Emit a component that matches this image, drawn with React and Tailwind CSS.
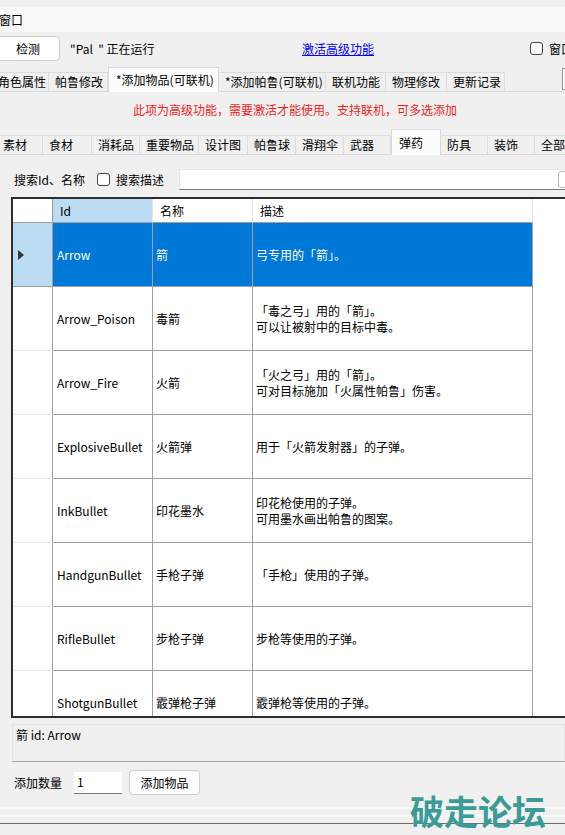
import React from 'react';

const mainTabs = [
  { label: '角色属性', cls: 'w-[57px] -ml-[8px]' },
  { label: '帕鲁修改', cls: 'w-[59px]' },
  { label: '*添加物品(可联机)', cls: 'w-[111px]', active: true },
  { label: '*添加帕鲁(可联机)', cls: 'w-[107px]' },
  { label: '联机功能', cls: 'w-[60px]' },
  { label: '物理修改', cls: 'w-[61px]' },
  { label: '更新记录', cls: 'w-[58px]' },
];

const itemTabs = [
  { label: '素材', cls: 'w-[46px] -ml-[3px]' },
  { label: '食材', cls: 'w-[49px]' },
  { label: '消耗品', cls: 'w-[48px]' },
  { label: '重要物品', cls: 'w-[59px]' },
  { label: '设计图', cls: 'w-[49px]' },
  { label: '帕鲁球', cls: 'w-[48px]' },
  { label: '滑翔伞', cls: 'w-[48px]' },
  { label: '武器', cls: 'w-[47px]' },
  { label: '弹药', cls: 'w-[50px]', active: true },
  { label: '防具', cls: 'w-[47px]' },
  { label: '装饰', cls: 'w-[47px]' },
  { label: '全部', cls: 'w-[48px]' },
];

const items = [
  { id: 'Arrow', name: '箭', desc: ['弓专用的「箭」。'] },
  { id: 'Arrow_Poison', name: '毒箭', desc: ['「毒之弓」用的「箭」。', '可以让被射中的目标中毒。'] },
  { id: 'Arrow_Fire', name: '火箭', desc: ['「火之弓」用的「箭」。', '可对目标施加「火属性帕鲁」伤害。'] },
  { id: 'ExplosiveBullet', name: '火箭弹', desc: ['用于「火箭发射器」的子弹。'] },
  { id: 'InkBullet', name: '印花墨水', desc: ['印花枪使用的子弹。', '可用墨水画出帕鲁的图案。'] },
  { id: 'HandgunBullet', name: '手枪子弹', desc: ['「手枪」使用的子弹。'] },
  { id: 'RifleBullet', name: '步枪子弹', desc: ['步枪等使用的子弹。'] },
  { id: 'ShotgunBullet', name: '霰弹枪子弹', desc: ['霰弹枪等使用的子弹。'] },
];

const Tab = ({ tab, tall }) => (
  <div
    className={
      tab.active
        ? `${tab.cls} ${tall} relative z-10 -mb-px shrink-0 flex items-center pl-[7px] bg-[#fcfcfc] border-t border-l border-r border-[#d9d9d9] whitespace-nowrap`
        : `${tab.cls} shrink-0 flex items-center pl-[6px] bg-[#f0f0f0] border-t border-r border-[#dcdcdc] whitespace-nowrap`
    }
  >
    {tab.label}
  </div>
);

const Row = ({ item, selected }) => (
  <div className={`flex h-[64px] ${selected ? 'text-white' : 'text-black'}`}>
    <div className={`w-[40px] shrink-0 flex items-center pl-[5px] border-r border-r-[#a0a0a0] border-b ${selected ? 'bg-[#bcdcf4] border-b-[#a0a0a0]' : 'bg-white border-b-[#e6e6e6]'}`}>
      {selected && (
        <svg width="7" height="10" viewBox="0 0 7 10">
          <polygon points="0,0 6,5 0,10" fill="#333" />
        </svg>
      )}
    </div>
    <div className={`w-[100px] shrink-0 flex items-center pl-[4px] border-r border-b border-[#a0a0a0] ${selected ? 'bg-[#0078d7]' : 'bg-white'}`}>
      {item.id}
    </div>
    <div className={`w-[100px] shrink-0 flex items-center pl-[3px] border-r border-b border-[#a0a0a0] ${selected ? 'bg-[#0078d7]' : 'bg-white'}`}>
      {item.name}
    </div>
    <div className={`w-[280px] shrink-0 flex flex-col justify-center pl-[3px] border-r border-b border-[#a0a0a0] leading-[16px] ${selected ? 'bg-[#0078d7]' : 'bg-white'}`}>
      {item.desc.map(line => (
        <div key={line}>{line}</div>
      ))}
    </div>
  </div>
);

const App = () => {
  return (
    <div className="relative w-[565px] h-[835px] overflow-hidden bg-[#f0f0f0] text-[12px] text-black font-['Noto_Sans_CJK_SC',sans-serif]">
      <div className="h-[7px]" />
      <div className="h-[25px] bg-[#f9f9f9] flex items-center">
        <span className="-ml-[1px]">窗口</span>
      </div>

      {/* detect row */}
      <div className="mt-[4px] h-[25px] flex items-center whitespace-nowrap">
        <button className="-ml-[13px] w-[73px] h-[25px] shrink-0 bg-white border border-[#cfcfcf] rounded-[4px] pl-[9px]">检测</button>
        <span className="ml-[10px] w-[232px] shrink-0 whitespace-pre">{'"Pal  " 正在运行'}</span>
        <a className="w-[228px] shrink-0 text-[#0000ff] underline cursor-pointer">激活高级功能</a>
        <span className="w-[13px] h-[13px] shrink-0 rounded-[3px] border border-[#444] bg-white" />
        <span className="ml-[6px]">窗口</span>
      </div>

      {/* main tabs */}
      <div className="mt-[7px] h-[24px] flex items-end border-b border-[#d9d9d9]">
        {mainTabs.map(tab => (
          <Tab key={tab.label} tab={tab} tall="h-[25px]" />
        ))}
        <div className="ml-auto w-[3px] h-[22px] mb-[1px] border-l border-t border-b border-[#999] bg-[#f8f8f8]" />
      </div>

      <div className="h-[36px] flex items-center pl-[133px] text-[#f21c1c]">
        此项为高级功能，需要激活才能使用。支持联机，可多选添加
      </div>

      {/* item tabs */}
      <div className="mt-[1px] h-[26px] flex items-end border-b border-[#d9d9d9]">
        {itemTabs.map(tab => (
          <Tab key={tab.label} tab={tab} tall="h-[26px]" />
        ))}
      </div>

      {/* search */}
      <div className="mt-[14px] h-[21px] flex items-center whitespace-nowrap">
        <span className="ml-[14px] w-[72px] shrink-0">搜索Id、名称</span>
        <span className="ml-[11px] w-[13px] h-[13px] shrink-0 rounded-[3px] border border-[#444] bg-white" />
        <span className="ml-[6px] w-[48px] shrink-0">搜索描述</span>
        <div className="ml-[15px] w-[400px] h-[21px] shrink-0 flex items-center bg-white border border-[#e6e6e6] border-b-[#7a7a7a]">
          <span className="ml-[378px] w-[12px] h-[17px] rounded-[3px] border border-[#bbb] bg-white" />
        </div>
      </div>

      {/* grid */}
      <div className="mt-[7px] ml-[11px] w-[570px] h-[521px] overflow-hidden border-2 border-[#2e2e2e] bg-white">
        <div className="flex h-[24px]">
          <div className="w-[40px] shrink-0 border-r border-b border-[#a0a0a0] bg-white" />
          <div className="w-[100px] shrink-0 flex items-center pl-[7px] bg-[#bcdcf4] border-r border-r-[#e5e5e5] border-b border-b-[#a0a0a0]">Id</div>
          <div className="w-[100px] shrink-0 flex items-center pl-[7px] bg-white border-r border-r-[#e5e5e5] border-b border-b-[#a0a0a0]">名称</div>
          <div className="w-[280px] shrink-0 flex items-center pl-[7px] bg-white border-r border-r-[#e5e5e5] border-b border-b-[#a0a0a0]">描述</div>
        </div>
        {items.map((item, i) => (
          <Row key={item.id} item={item} selected={i === 0} />
        ))}
      </div>

      {/* selected label */}
      <div className="mt-[6px] ml-[12px] w-[553px] h-[38px] border border-[#e3e3e3] border-b-[#a0a0a0] pt-[1px] pl-[3px]">
        箭 id: Arrow
      </div>

      {/* add row */}
      <div className="mt-[8px] h-[25px] flex items-center whitespace-nowrap">
        <span className="ml-[14px] w-[48px] shrink-0">添加数量</span>
        <div className="ml-[12px] w-[48px] h-[22px] shrink-0 flex items-center pl-[3px] bg-white border-b border-[#7a7a7a]">1</div>
        <button className="ml-[7px] w-[71px] h-[25px] shrink-0 bg-[#fdfdfd] border border-[#d0d0d0] rounded-[4px]">添加物品</button>
      </div>

      <div className="mt-[12px] h-[2px] bg-[#fafafa]" />
      <div className="mt-[6px] h-[2px] bg-[#fafafa]" />
      <div className="mt-[6px] h-px bg-[#6e6e6e]" />

      <div className="absolute left-[410px] top-[794px] text-[34px] leading-none font-bold text-[#3a9b97]">
        破走论坛
      </div>
    </div>
  );
};

export default App;
